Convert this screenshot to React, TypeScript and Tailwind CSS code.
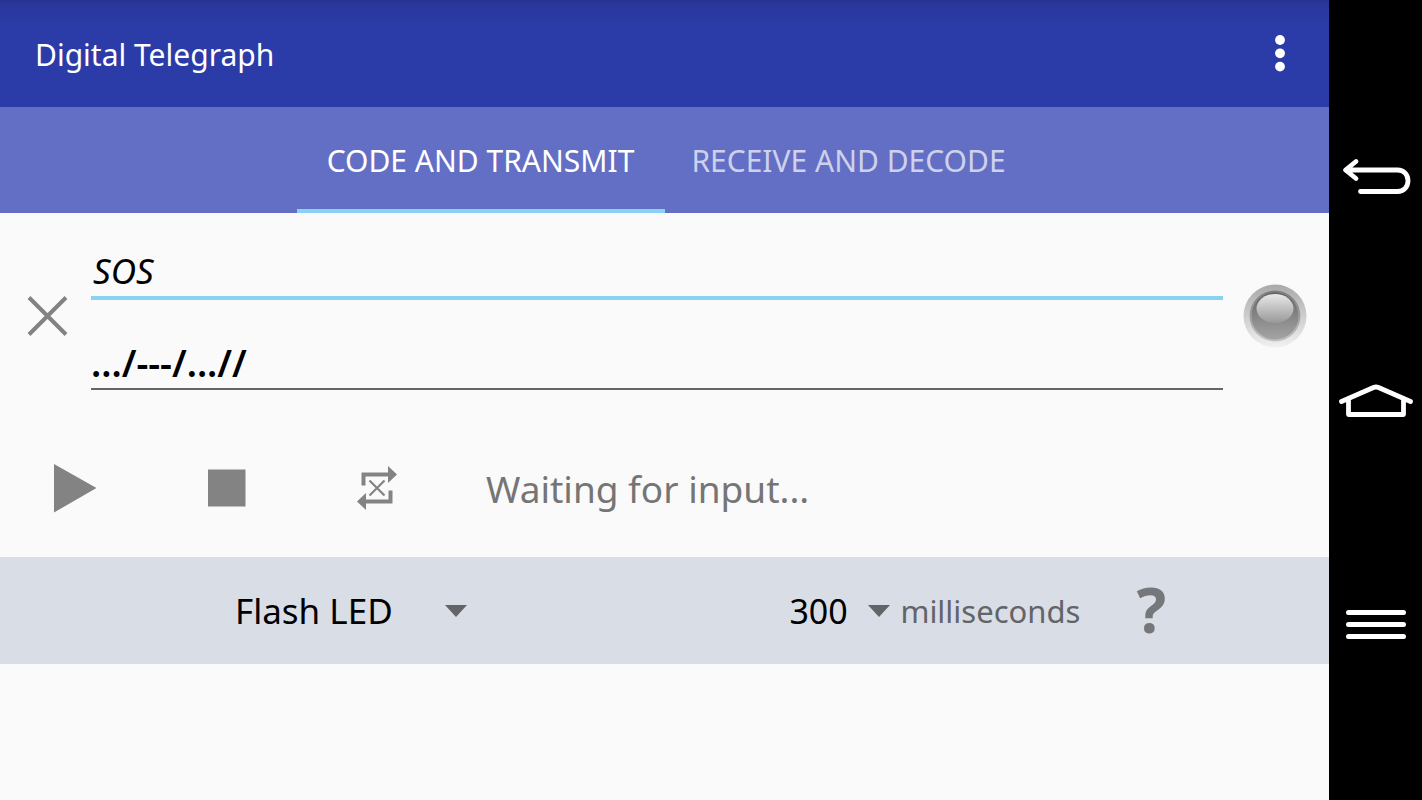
import React, { useState } from 'react';

export default function App() {
  return (
    <div className="flex min-h-screen bg-[#fafafa] font-['Noto_Sans',sans-serif]">
      <div className="flex-1 min-w-0">
        <AppBar />
        <Tabs />
        <Transmitter />
        <Settings />
      </div>
      <NavigationBar />
    </div>
  );
}

function AppBar() {
  return (
    <header className="flex items-center justify-between h-[107px] pl-[35px] pr-6 bg-linear-to-b from-[#26338f] via-[#2a389d] via-5% to-[#2b3ba8] to-25%">
      <h1 className="pt-0.5 text-[30px] leading-10 text-white">Digital Telegraph</h1>
      <button aria-label="More options" className="flex justify-center w-[50px] py-2">
        <svg width="10" height="38" viewBox="0 0 10 38" fill="#fff">
          <circle cx="5" cy="5" r="4.9" />
          <circle cx="5" cy="18.3" r="4.9" />
          <circle cx="5" cy="31.6" r="4.9" />
        </svg>
      </button>
    </header>
  );
}

const tabs = ['CODE AND TRANSMIT', 'RECEIVE AND DECODE'];

function Tabs() {
  const [active, setActive] = useState(0);

  return (
    <nav role="tablist" className="flex justify-center h-[106px] bg-[#636fc4]">
      {tabs.map((tab, i) => (
        <button
          key={tab}
          role="tab"
          aria-selected={i === active}
          onClick={() => setActive(i)}
          className={`w-[368px] pt-1.5 border-b-4 text-[30px] leading-10 whitespace-nowrap ${
            i === active ? 'text-white border-[#8ad2f2]' : 'text-[#ced1ec] border-transparent'
          }`}
        >
          {tab}
        </button>
      ))}
    </nav>
  );
}

function Transmitter() {
  const [text, setText] = useState('SOS');
  const [code, setCode] = useState('.../---/...//');

  return (
    <main>
      <div className="flex items-center pt-[23px] pl-[27px] pr-[22px]">
        <button aria-label="Clear" className="mt-1.5">
          <svg width="42" height="42" viewBox="0 0 42 42" stroke="#838383" strokeWidth="4">
            <path d="M2 2.5 39 39.5M39 2.5 2 39.5" />
          </svg>
        </button>
        <div className="flex-1 flex flex-col ml-[22px] mr-5">
          <input
            aria-label="Message"
            value={text}
            onChange={(e) => setText(e.target.value)}
            className="h-16 pt-2 pl-0.5 border-b-4 border-[#8ad2f2] text-[35px] italic text-black outline-none"
          />
          <input
            aria-label="Morse code"
            value={code}
            onChange={(e) => setCode(e.target.value)}
            className="h-[90px] pt-9 border-b-2 border-[#666] text-[37px] font-semibold text-black outline-none"
          />
        </div>
        <Led />
      </div>

      <div className="flex items-center h-[167px] pt-7 pl-[54px]">
        <button aria-label="Play" className="w-[154px]">
          <svg width="43" height="50" viewBox="0 0 43 50" fill="#838383">
            <path d="M0 1 42.5 25 0 49.5z" />
          </svg>
        </button>
        <button aria-label="Stop" className="w-[149px]">
          <svg width="38" height="38" viewBox="0 0 38 38" fill="#838383">
            <path d="M0 .5h37.5v37H0z" />
          </svg>
        </button>
        <button aria-label="Repeat off" className="w-[129px]">
          <svg width="40" height="44" viewBox="0 0 40 44" fill="#838383">
            <path d="M4.5 6.500H31V0l9 8.500-9 8.500v-6.500H8.500v9h-4zM35.500 37.500H9V44L0 35.500 9 27v6.500h22.500v-9h4z" />
            <path d="M12.500 14.500l15 15M27.500 14.500l-15 15" stroke="#838383" strokeWidth="2.2" />
          </svg>
        </button>
        <p className="pt-0.5 text-[37px] leading-12 text-[#757575]">Waiting for input...</p>
      </div>
    </main>
  );
}

function Led() {
  return (
    <svg width="64" height="64" viewBox="0 0 64 64" className="shrink-0 mt-1.5">
      <defs>
        <linearGradient id="led-ring" x2="0" y2="1">
          <stop offset="0" stopColor="#a9a9a9" />
          <stop offset="1" stopColor="#f1f1f1" />
        </linearGradient>
        <linearGradient id="led-rim" x2="0" y2="1">
          <stop offset="0" stopColor="#7c7c7c" />
          <stop offset="1" stopColor="#c4c4c4" />
        </linearGradient>
        <linearGradient id="led-body" x2="0" y2="1">
          <stop offset="0" stopColor="#606060" />
          <stop offset="0.5" stopColor="#868686" />
          <stop offset="1" stopColor="#a4a4a4" />
        </linearGradient>
        <linearGradient id="led-shine" x2="0" y2="1">
          <stop offset="0" stopColor="#e8e8e8" />
          <stop offset="1" stopColor="#999" />
        </linearGradient>
      </defs>
      <circle cx="32" cy="32" r="31.5" fill="url(#led-ring)" />
      <circle cx="32" cy="32" r="25.5" fill="url(#led-rim)" />
      <circle cx="32" cy="32" r="23.5" fill="url(#led-body)" />
      <ellipse cx="32" cy="24.5" rx="18.5" ry="14.5" fill="url(#led-shine)" />
    </svg>
  );
}

function Caret() {
  return (
    <svg width="22" height="12" viewBox="0 0 22 12" fill="#636467" className="shrink-0 pointer-events-none">
      <path d="M0 0h22L11 12z" />
    </svg>
  );
}

function Settings() {
  return (
    <section className="flex items-center justify-between h-[107px] pl-[235px] pr-[163px] bg-[#d9dde6]">
      <div className="flex items-center">
        <select aria-label="Output" className="appearance-none w-[210px] text-[35px] leading-12 text-black">
          <option>Flash LED</option>
        </select>
        <Caret />
      </div>
      <div className="flex items-center">
        <select id="unit" className="appearance-none w-[79px] text-[34px] leading-12 text-black">
          <option>300</option>
        </select>
        <Caret />
        <label htmlFor="unit" className="ml-2.5 text-[31px] leading-12 text-[#636467]">
          milliseconds
        </label>
        <button aria-label="Help" className="ml-14 pb-1 text-[62px] leading-16 font-bold text-[#76777b]">
          ?
        </button>
      </div>
    </section>
  );
}

function NavigationBar() {
  return (
    <nav className="flex flex-col justify-between items-center w-[93px] pt-[157px] pb-[160px] bg-black">
      <button aria-label="Back">
        <svg width="70" height="38" viewBox="0 0 70 38" fill="none" stroke="#fff" strokeWidth="4.8" strokeLinecap="round" strokeLinejoin="round">
          <path d="M15 4.500 4.500 13l10.500 8.500M5.500 13h51c6.500 0 10.500 5 10.500 10.800s-4 10.700-10.500 10.700H19.500" />
        </svg>
      </button>
      <button aria-label="Home">
        <svg width="76" height="36" viewBox="0 0 76 36" fill="none" stroke="#fff" strokeWidth="4.8" strokeLinecap="round" strokeLinejoin="round">
          <path d="M3.500 17.500 35.500 3.500q2.500-1 5 0l32 14M10.500 15v15.500h55V15" />
        </svg>
      </button>
      <button aria-label="Menu">
        <svg width="60" height="32" viewBox="0 0 60 32" stroke="#fff" strokeWidth="5" strokeLinecap="round">
          <path d="M2.500 4.500h55M2.500 16.500h55M2.500 28.500h55" />
        </svg>
      </button>
    </nav>
  );
}
